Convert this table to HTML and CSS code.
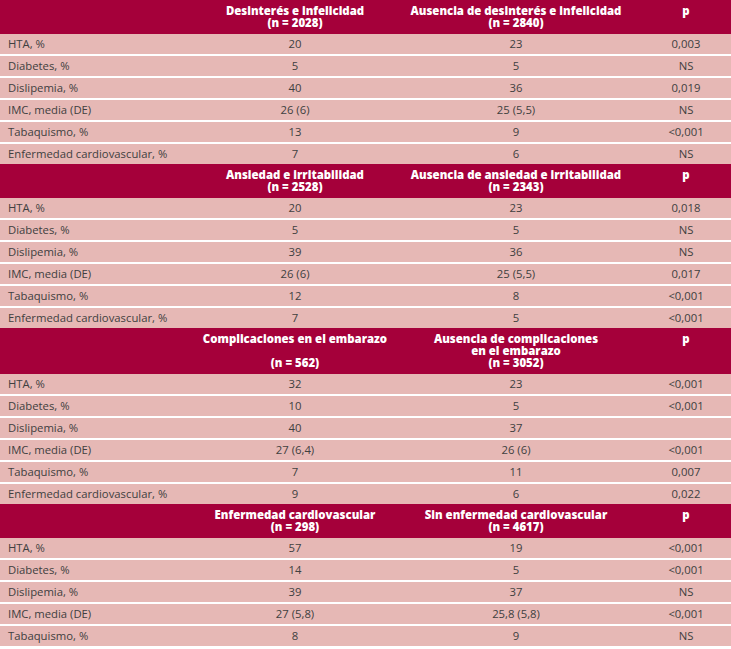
FILE: index.html
```html
<!DOCTYPE html>
<html lang="es">
<head>
<meta charset="utf-8">
<title>Tabla</title>
<link rel="stylesheet" href="styles.css">
</head>
<body>
<table class="data">
  <colgroup>
    <col class="c1"><col class="c2"><col class="c3"><col class="c4">
  </colgroup>
  <tbody>
    <tr class="head">
      <th></th>
      <th>Desinterés e infelicidad<br>(n = 2028)</th>
      <th>Ausencia de desinterés e infelicidad<br>(n = 2840)</th>
      <th>p</th>
    </tr>
    <tr class="row"><td>HTA, %</td><td>20</td><td>23</td><td>0,003</td></tr>
    <tr class="row"><td>Diabetes, %</td><td>5</td><td>5</td><td>NS</td></tr>
    <tr class="row"><td>Dislipemia, %</td><td>40</td><td>36</td><td>0,019</td></tr>
    <tr class="row"><td>IMC, media (DE)</td><td>26 (6)</td><td>25 (5,5)</td><td>NS</td></tr>
    <tr class="row"><td>Tabaquismo, %</td><td>13</td><td>9</td><td>&lt;0,001</td></tr>
    <tr class="row"><td>Enfermedad cardiovascular, %</td><td>7</td><td>6</td><td>NS</td></tr>

    <tr class="head">
      <th></th>
      <th>Ansiedad e irritabilidad<br>(n = 2528)</th>
      <th>Ausencia de ansiedad e irritabilidad<br>(n = 2343)</th>
      <th>p</th>
    </tr>
    <tr class="row"><td>HTA, %</td><td>20</td><td>23</td><td>0,018</td></tr>
    <tr class="row"><td>Diabetes, %</td><td>5</td><td>5</td><td>NS</td></tr>
    <tr class="row"><td>Dislipemia, %</td><td>39</td><td>36</td><td>NS</td></tr>
    <tr class="row"><td>IMC, media (DE)</td><td>26 (6)</td><td>25 (5,5)</td><td>0,017</td></tr>
    <tr class="row"><td>Tabaquismo, %</td><td>12</td><td>8</td><td>&lt;0,001</td></tr>
    <tr class="row"><td>Enfermedad cardiovascular, %</td><td>7</td><td>5</td><td>&lt;0,001</td></tr>

    <tr class="head">
      <th></th>
      <th>Complicaciones en el embarazo<br><br>(n = 562)</th>
      <th>Ausencia de complicaciones<br>en el embarazo<br>(n = 3052)</th>
      <th>p</th>
    </tr>
    <tr class="row"><td>HTA, %</td><td>32</td><td>23</td><td>&lt;0,001</td></tr>
    <tr class="row"><td>Diabetes, %</td><td>10</td><td>5</td><td>&lt;0,001</td></tr>
    <tr class="row"><td>Dislipemia, %</td><td>40</td><td>37</td><td></td></tr>
    <tr class="row"><td>IMC, media (DE)</td><td>27 (6,4)</td><td>26 (6)</td><td>&lt;0,001</td></tr>
    <tr class="row"><td>Tabaquismo, %</td><td>7</td><td>11</td><td>0,007</td></tr>
    <tr class="row"><td>Enfermedad cardiovascular, %</td><td>9</td><td>6</td><td>0,022</td></tr>

    <tr class="head">
      <th></th>
      <th>Enfermedad cardiovascular<br>(n = 298)</th>
      <th>Sin enfermedad cardiovascular<br>(n = 4617)</th>
      <th>p</th>
    </tr>
    <tr class="row"><td>HTA, %</td><td>57</td><td>19</td><td>&lt;0,001</td></tr>
    <tr class="row"><td>Diabetes, %</td><td>14</td><td>5</td><td>&lt;0,001</td></tr>
    <tr class="row"><td>Dislipemia, %</td><td>39</td><td>37</td><td>NS</td></tr>
    <tr class="row"><td>IMC, media (DE)</td><td>27 (5,8)</td><td>25,8 (5,8)</td><td>&lt;0,001</td></tr>
    <tr class="row"><td>Tabaquismo, %</td><td>8</td><td>9</td><td>NS</td></tr>
  </tbody>
</table>
</body>
</html>
```

FILE: styles.css
```css
html, body {
  margin: 0;
  padding: 0;
  background: #ffffff;
}

.data {
  width: 731px;
  table-layout: fixed;
  border-collapse: collapse;
  border-spacing: 0;
  font-family: "Open Sans", "Noto Sans", sans-serif;
}

.c1 { width: 199px; }
.c2 { width: 192px; }
.c3 { width: 250px; }
.c4 { width: 90px; }

.head th {
  background: #a5003a;
  color: #ffffff;
  font-weight: 800;
  font-size: 11.4px;
  line-height: 12px;
  padding: 5px 2px 5px;
  text-align: center;
  vertical-align: top;
  white-space: nowrap;
}

.row td {
  background: #e6b8b5;
  color: #404040;
  font-size: 11.3px;
  line-height: 20px;
  height: 20px;
  padding: 0 4px;
  text-align: center;
  white-space: nowrap;
}

.row td:first-child {
  text-align: left;
  padding-left: 8px;
}

.row + .row td {
  border-top: 2px solid #ffffff;
}
```
